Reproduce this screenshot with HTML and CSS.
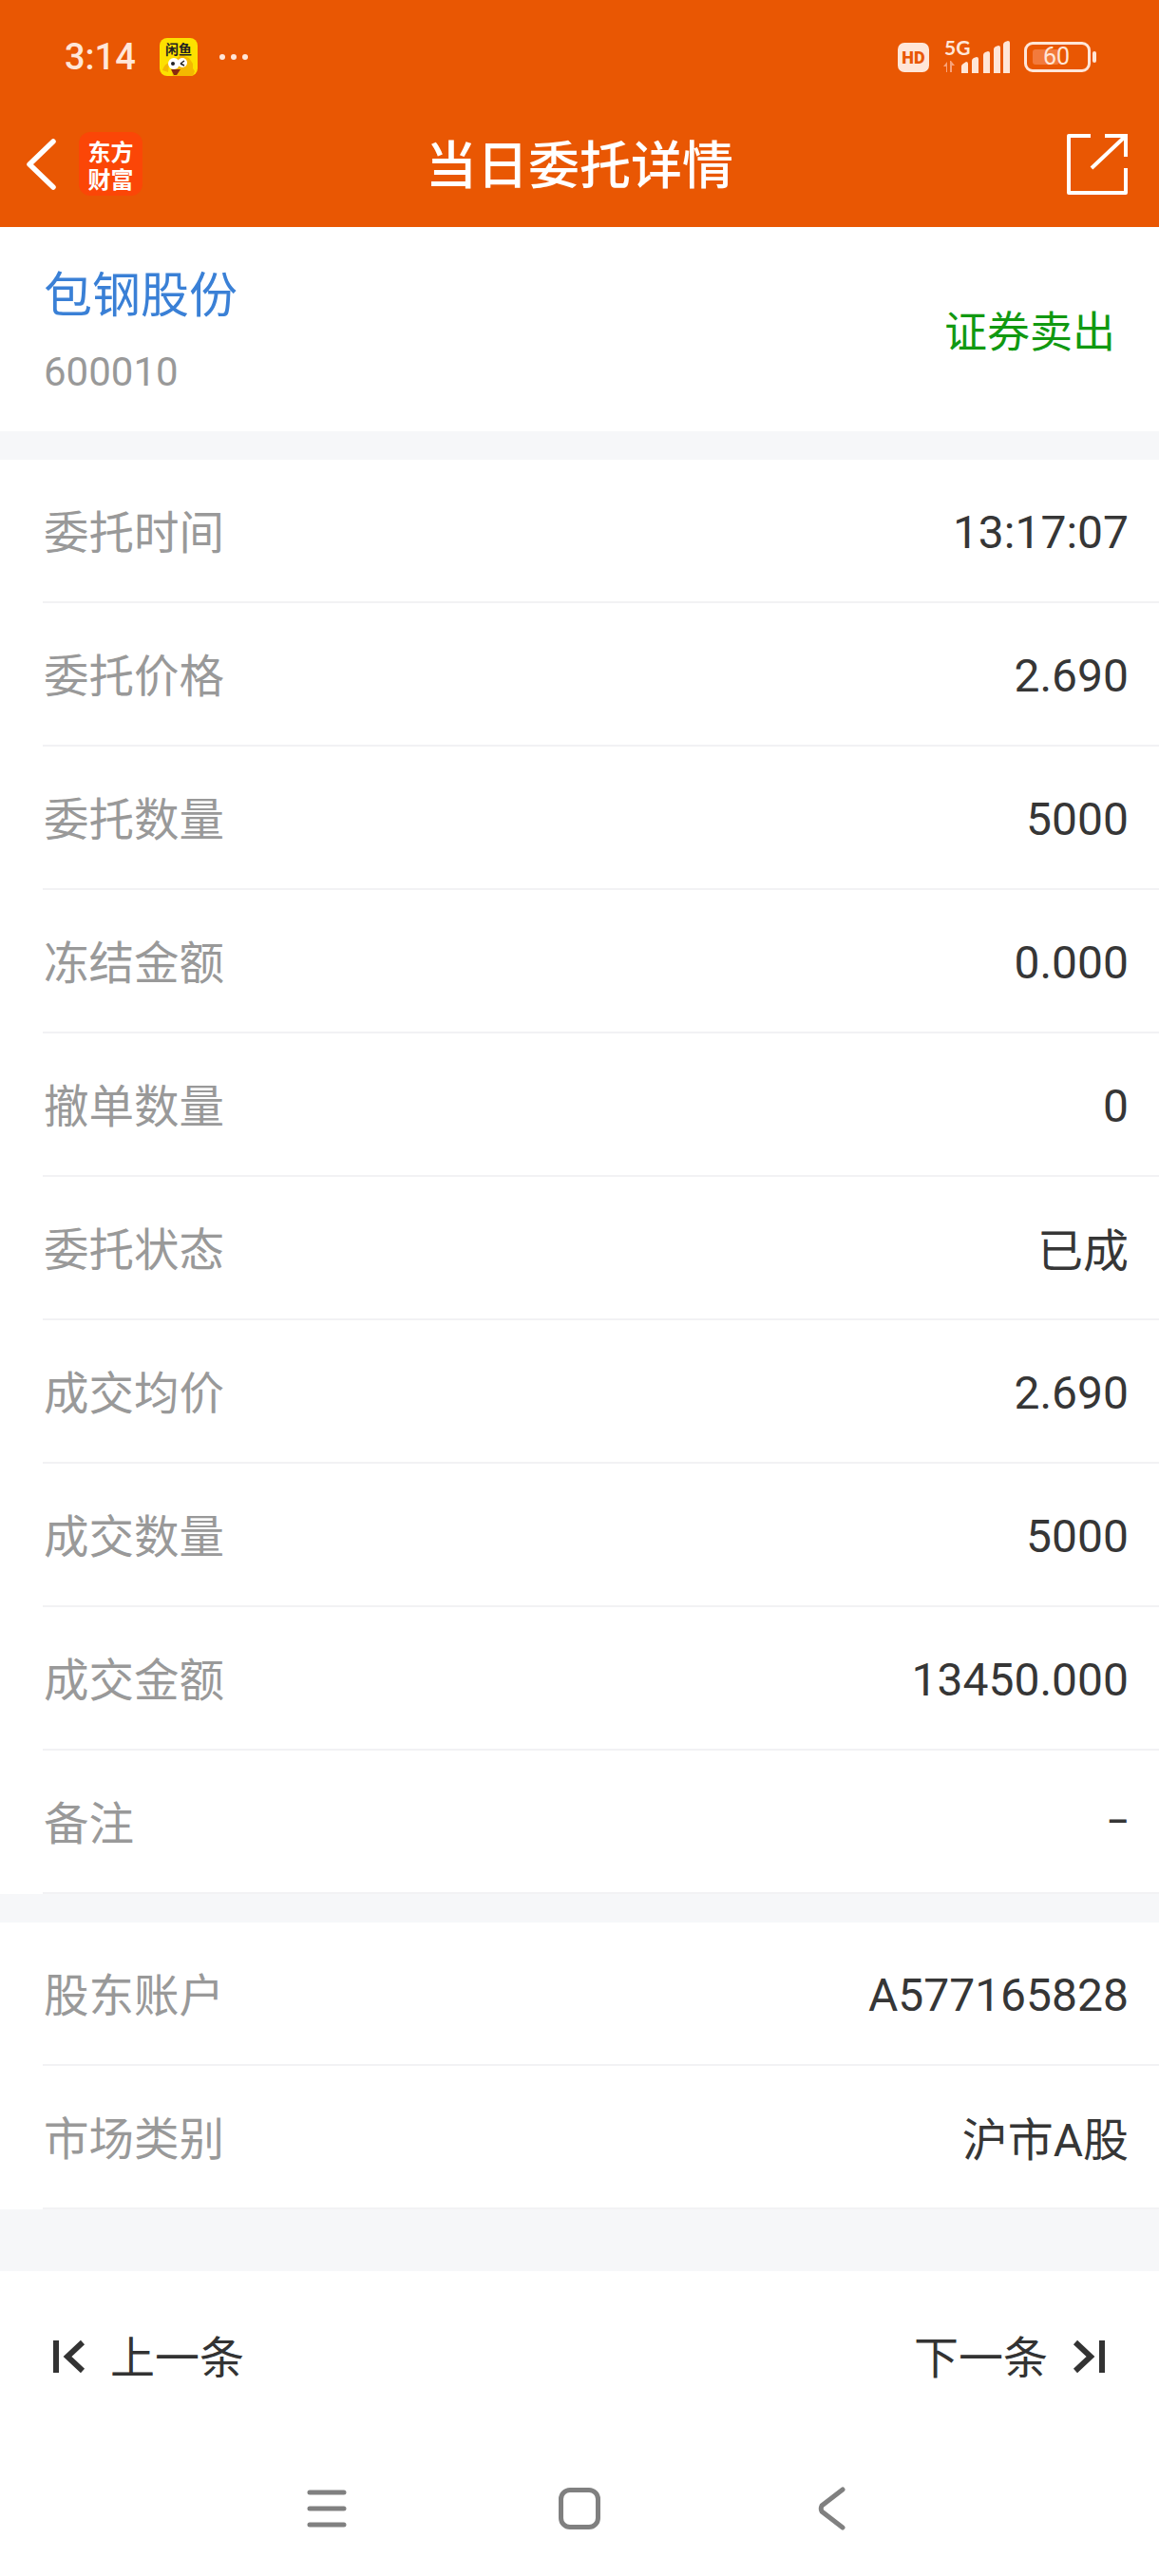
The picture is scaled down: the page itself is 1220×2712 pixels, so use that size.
FILE: index.html
```html
<!DOCTYPE html>
<html lang="zh-CN">
<head>
<meta charset="utf-8">
<title>当日委托详情</title>
<link rel="stylesheet" href="styles.css">
</head>
<body>

<header class="top">
  <div class="status">
    <span class="clock">3:14</span>
    <div class="fish">
      <span class="fish-text">闲鱼</span>
      <svg width="40" height="40" viewBox="0 0 40 40">
        <path d="M14 40C11 30 15 20 25 18L28 20L31 21L33 24L35 27L35 32L37 35L35 40Z" fill="#f4b800"/>
        <path d="M3 34C5 28 8 26 10 27L9 36Z" fill="#f4b800"/>
        <circle cx="15" cy="27" r="6" fill="#fff"/>
        <circle cx="24" cy="26" r="5" fill="#fff"/>
        <circle cx="14" cy="27" r="2" fill="#222"/>
        <path d="M22 27L26 24M22 27L26 29" stroke="#222" stroke-width="1.500" fill="none"/>
        <path d="M12 33H22L18 39H15Z" fill="#8a2a10"/>
      </svg>
    </div>
    <span class="dots"><i></i><i></i><i></i></span>
    <div class="status-right">
      <span class="hd">HD</span>
      <div class="net">
        <span class="net-text">5G</span>
        <svg width="73" height="36" viewBox="0 0 73 36">
          <path d="M0 28L4 23V34H3V28ZM7 22H8L12 27H9V34H7Z" fill="#f8a27a" transform="translate(2 0)"/>
          <path d="M21 35V28Q21 26 23 25L26 23Q28 23 28 25V35ZM32 35V22Q32 20 34 19L37 18Q39 18 39 20V35ZM44 35V16Q44 14 46 13L49 12Q51 12 51 14V35ZM55 35V10Q55 8 57 7L60 6Q62 6 62 8V35ZM65 35V5Q65 3 67 2L70 1Q72 1 72 3V35Z" fill="#ffe6d8"/>
        </svg>
      </div>
      <div class="battery">
        <span class="battery-fill"></span>
        <span class="battery-num">60</span>
      </div>
      <span class="battery-nub"></span>
    </div>
  </div>
  <div class="toolbar">
    <svg class="back" width="34" height="54" viewBox="0 0 34 54">
      <path d="M30 3L5 27L30 51" fill="none" stroke="#fff" stroke-width="5.500" stroke-linecap="round" stroke-linejoin="round"/>
    </svg>
    <div class="logo"><span>东方</span><span>财富</span></div>
    <h1 class="page-title">当日委托详情</h1>
    <svg class="share" width="64" height="64" viewBox="0 0 64 64">
      <path d="M25 2H2V62H62V36" fill="none" stroke="#fff" stroke-width="4" stroke-linejoin="round"/>
      <path d="M26 36L61 3M40 2H62V24" fill="none" stroke="#fff" stroke-width="4"/>
    </svg>
  </div>
</header>

<section class="stock">
  <div>
    <div class="stock-name">包钢股份</div>
    <div class="stock-code">600010</div>
  </div>
  <div class="stock-side">证券卖出</div>
</section>

<section class="group">
  <div class="row"><span class="label">委托时间</span><span class="value">13:17:07</span></div>
  <div class="row"><span class="label">委托价格</span><span class="value">2.690</span></div>
  <div class="row"><span class="label">委托数量</span><span class="value">5000</span></div>
  <div class="row"><span class="label">冻结金额</span><span class="value">0.000</span></div>
  <div class="row"><span class="label">撤单数量</span><span class="value">0</span></div>
  <div class="row"><span class="label">委托状态</span><span class="value value-cjk">已成</span></div>
  <div class="row"><span class="label">成交均价</span><span class="value">2.690</span></div>
  <div class="row"><span class="label">成交数量</span><span class="value">5000</span></div>
  <div class="row"><span class="label">成交金额</span><span class="value">13450.000</span></div>
  <div class="row"><span class="label">备注</span><span class="value value-dash">–</span></div>
</section>

<section class="group group-small">
  <div class="row"><span class="label">股东账户</span><span class="value">A577165828</span></div>
  <div class="row"><span class="label">市场类别</span><span class="value value-cjk">沪市A股</span></div>
</section>

<footer class="bottom">
  <div class="pager">
    <div class="pager-item">
      <svg width="34" height="36" viewBox="0 0 34 36">
        <path d="M3 1V35" stroke="#333" stroke-width="6" fill="none"/>
        <path d="M31 3L15 18L31 33" stroke="#333" stroke-width="6" fill="none"/>
      </svg>
      <span class="pager-text">上一条</span>
    </div>
    <div class="pager-item">
      <span class="pager-text">下一条</span>
      <svg width="34" height="36" viewBox="0 0 34 36">
        <path d="M3 3L19 18L3 33" stroke="#333" stroke-width="6" fill="none"/>
        <path d="M31 1V35" stroke="#333" stroke-width="6" fill="none"/>
      </svg>
    </div>
  </div>
  <nav class="navbar">
    <span class="nav-btn">
      <svg width="44" height="40" viewBox="0 0 44 40">
        <path d="M4 3H40M4 20H40M4 37H40" stroke="#808080" stroke-width="5" stroke-linecap="round"/>
      </svg>
    </span>
    <span class="nav-btn"><span class="nav-home"></span></span>
    <span class="nav-btn">
      <svg width="30" height="46" viewBox="0 0 30 46">
        <path d="M26 3L4 20Q2.500 23 4 26L26 43" stroke="#808080" stroke-width="5" stroke-linecap="round" fill="none"/>
      </svg>
    </span>
  </nav>
</footer>

</body>
</html>
```

FILE: styles.css
```css
* {
  box-sizing: border-box;
}
body {
  margin: 0;
  width: 1220px;
  height: 2712px;
  background-color: #f6f7f9;
  font-family: Roboto, "Noto Sans CJK SC", sans-serif;
  color: #333;
}

/* orange header */
.top {
  height: 239px;
  background-color: #e95703;
}
.status {
  display: flex;
  align-items: center;
  height: 106px;
  padding: 14px 66px 0 68px;
}
.clock {
  width: 100px;
  font-size: 38px;
  font-weight: 500;
  color: #ffe6d8;
}
.fish {
  position: relative;
  flex: none;
  width: 40px;
  height: 40px;
  border-radius: 8px;
  background-color: #fde000;
  overflow: hidden;
}
.fish svg {
  display: block;
}
.fish-text {
  position: absolute;
  left: 0;
  right: 0;
  top: 3px;
  font-family: "Noto Sans CJK SC", sans-serif;
  font-size: 14px;
  font-weight: 700;
  line-height: 16px;
  text-align: center;
  color: #222;
}
.dots {
  display: flex;
  gap: 6px;
  margin-left: 23px;
}
.dots i {
  width: 6px;
  height: 6px;
  border-radius: 50%;
  background-color: #ffe6d8;
}
.status-right {
  display: flex;
  align-items: center;
  margin-left: auto;
}
.hd {
  width: 33px;
  height: 31px;
  border-radius: 7px;
  background-color: #ffe6d8;
  color: #e95703;
  font-size: 18px;
  font-weight: 900;
  line-height: 31px;
  text-align: center;
}
.net {
  position: relative;
  width: 73px;
  height: 36px;
  margin-left: 13px;
}
.net svg {
  display: block;
}
.net-text {
  position: absolute;
  left: 3px;
  top: -3px;
  font-family: Lato, sans-serif;
  font-size: 21px;
  font-weight: 700;
  line-height: 22px;
  color: #ffe6d8;
}
.battery {
  position: relative;
  width: 70px;
  height: 32px;
  margin-left: 14px;
  border: 3px solid #ffe6d8;
  border-radius: 9px;
}
.battery-fill {
  position: absolute;
  left: 6px;
  top: 5px;
  width: 28px;
  height: 16px;
  border-radius: 3px;
  background-color: #f27a3c;
}
.battery-num {
  position: absolute;
  left: 17px;
  top: 0;
  font-size: 25px;
  line-height: 26px;
  color: #ffe6d8;
}
.battery-nub {
  width: 4px;
  height: 12px;
  margin-left: 2px;
  border-radius: 2px;
  background-color: #ffe6d8;
}

.toolbar {
  position: relative;
  display: flex;
  align-items: center;
  height: 133px;
  padding: 0 33px 0 26px;
}
.logo {
  display: flex;
  flex-direction: column;
  align-items: center;
  justify-content: center;
  width: 67px;
  height: 67px;
  margin-left: 23px;
  border-radius: 12px;
  background-color: #fb4607;
  color: #fff;
  font-family: "Noto Sans CJK SC", sans-serif;
  font-size: 24px;
  font-weight: 700;
  line-height: 29px;
}
.page-title {
  position: absolute;
  left: 0;
  right: 0;
  top: 37px;
  margin: 0;
  font-size: 54px;
  font-weight: 500;
  line-height: 66px;
  text-align: center;
  color: #fff;
}
.share {
  margin-left: auto;
}

/* stock head */
.stock {
  display: flex;
  align-items: center;
  justify-content: space-between;
  height: 215px;
  padding: 0 46px;
  background-color: #fff;
}
.stock-name {
  font-size: 51px;
  line-height: 70px;
  color: #3a80d6;
}
.stock-code {
  margin-top: 20px;
  font-size: 42px;
  line-height: 50px;
  color: #999;
}
.stock-side {
  font-size: 45px;
  color: #119911;
}

/* detail rows */
.group {
  margin-top: 30px;
  background-color: #fff;
}
.row {
  display: flex;
  align-items: center;
  justify-content: space-between;
  height: 151px;
  margin-left: 45px;
  padding: 0 32px 0 1px;
  border-bottom: 2px solid #f2f2f4;
  font-size: 48px;
}
.label {
  padding-bottom: 3px;
  font-size: 47.500px;
  color: #999;
}
.value {
  padding-top: 4px;
  color: #363636;
}
.value-cjk {
  padding-top: 0;
  padding-bottom: 2px;
}
.value-dash {
  padding-top: 0;
  font-size: 36px;
  font-weight: 500;
}

.bottom {
  height: 322px;
  margin-top: 65px;
  background-color: #fff;
}
.pager {
  display: flex;
  align-items: center;
  justify-content: space-between;
  height: 180px;
  padding: 0 57px 0 56px;
}
.pager-item {
  display: flex;
  align-items: center;
  gap: 26px;
  font-size: 47px;
  color: #333;
}
.pager-text {
  padding-bottom: 5px;
}
.navbar {
  display: flex;
  justify-content: center;
  gap: 206px;
  height: 142px;
  padding-top: 47px;
}
.nav-btn {
  display: flex;
  align-items: center;
  justify-content: center;
  width: 60px;
  height: 46px;
}
.nav-home {
  width: 44px;
  height: 44px;
  border: 5px solid #808080;
  border-radius: 12px;
}
```
